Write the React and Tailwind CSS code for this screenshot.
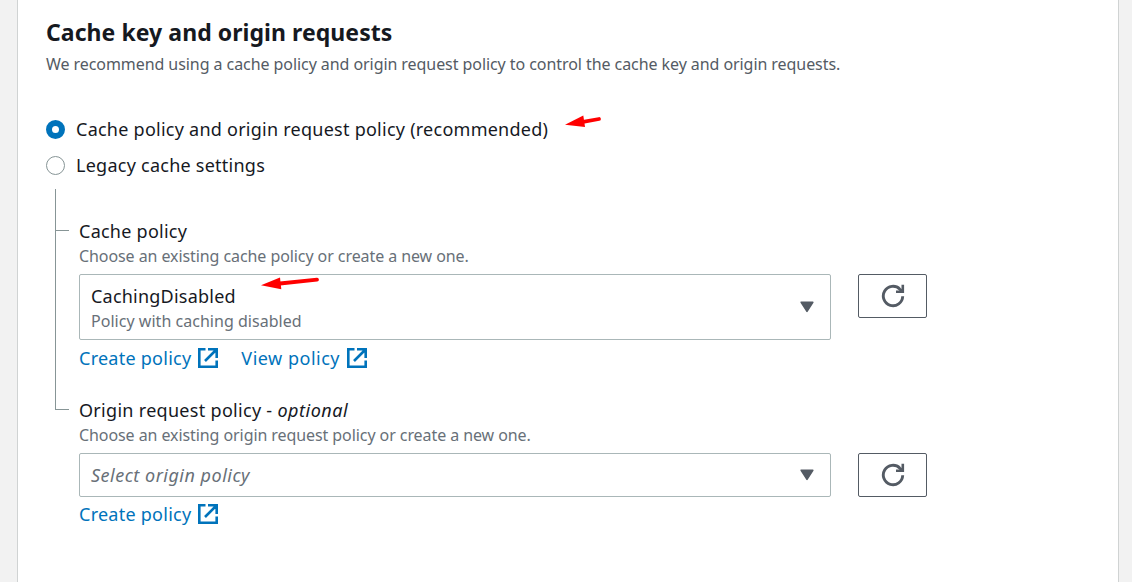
const Radio = ({ checked, children }) => (
  <label className="flex h-7 items-center">
    <span
      className={
        checked
          ? "size-[19px] rounded-full border-[6px] border-[#0073bb] bg-white"
          : "size-[19px] rounded-full border-[1.5px] border-[#879596] bg-white"
      }
    />
    <span className="ml-[11px] text-[18px] tracking-[0.25px] whitespace-nowrap">{children}</span>
  </label>
);

const External = () => (
  <svg className="ml-[7px]" width="20" height="20" viewBox="0 0 20 20" fill="none" stroke="#0073bb" strokeWidth="2.6">
    <path d="M7.5 1.3H1.3V18.7H18.7V12.5" />
    <path d="M10 1.3H18.7V10M18 2L7 13" />
  </svg>
);

const PolicyLink = ({ children }) => (
  <a className="flex items-center text-[18px] text-[#0073bb] whitespace-nowrap">
    {children}
    <External />
  </a>
);

const Caret = () => (
  <svg className="shrink-0" width="14" height="12" viewBox="0 0 14 12">
    <path d="M1.2 1.2H12.8L7 10.4Z" fill="#545b64" stroke="#545b64" strokeWidth="1.6" strokeLinejoin="round" />
  </svg>
);

const RefreshButton = () => (
  <button className="ml-[27px] flex h-11 w-[69px] items-center justify-center rounded-[2px] border border-[#545b64] bg-white">
    <svg width="24" height="24" viewBox="0 0 24 24" fill="none" stroke="#545b64" strokeWidth="2.9">
      <path d="M21.7 12.3A9.7 9.7 0 1 1 18.9 5.2L20.8 7" />
      <path d="M21.8 0.8V7.8H15" strokeWidth="2.6" />
    </svg>
  </button>
);

const Hint = ({ children }) => (
  <p className="h-[22px] text-[16px] leading-[22px] tracking-[-0.08px] text-[#687078] whitespace-nowrap">{children}</p>
);

export default function App() {
  return (
    <div className="flex h-[582px] w-[1132px] overflow-hidden bg-[#f2f2f2] pr-[13px] pl-[17px] font-['Noto_Sans',sans-serif] text-[#16191f]">
      <main className="relative flex-1 border-r border-l border-[#d0d3d3] bg-white pt-4 pl-7">
        <h2 className="h-8 text-[23px] leading-8 font-bold tracking-[0.06px] whitespace-nowrap">
          Cache key and origin requests
        </h2>
        <p className="mt-1 h-6 text-[16px] leading-6 tracking-[-0.068px] text-[#545b64] whitespace-nowrap">
          We recommend using a cache policy and origin request policy to control the cache key and origin requests.
        </p>
        <div className="mt-[39px] flex flex-col gap-2">
          <Radio checked>Cache policy and origin request policy (recommended)</Radio>
          <Radio>Legacy cache settings</Radio>
        </div>
        <div className="mt-[10px] ml-[9px] flex">
          <div className="mr-[10px] w-[14px] shrink-0">
            <div className="h-[42px] border-b border-l border-[#879596]" />
            <div className="h-[179px] border-b border-l border-[#879596]" />
          </div>
          <div className="pt-7">
            <h3 className="h-7 text-[18px] leading-7 tracking-[0.25px]">Cache policy</h3>
            <Hint>Choose an existing cache policy or create a new one.</Hint>
            <div className="mt-[7px] flex">
              <div className="flex h-[66px] w-[752px] items-center justify-between rounded-[2px] border border-[#aab7b8] pr-4 pl-[11px]">
                <div className="pt-px">
                  <p className="h-[26px] text-[18px] leading-[25px] tracking-[0.22px]">CachingDisabled</p>
                  <p className="h-[22px] text-[16px] leading-[22px] tracking-[0.03px] text-[#687078]">
                    Policy with caching disabled
                  </p>
                </div>
                <Caret />
              </div>
              <RefreshButton />
            </div>
            <div className="mt-1 flex h-7 items-center gap-[23px]">
              <PolicyLink>
                <span className="tracking-[0.25px]">Create policy</span>
              </PolicyLink>
              <PolicyLink>
                <span className="tracking-[0.5px]">View policy</span>
              </PolicyLink>
            </div>
            <h3 className="mt-6 h-7 text-[18px] leading-7 tracking-[0.3px]">
              Origin request policy - <i className="tracking-[0.5px]">optional</i>
            </h3>
            <Hint>Choose an existing origin request policy or create a new one.</Hint>
            <div className="mt-[7px] flex">
              <div className="flex h-11 w-[752px] items-center justify-between rounded-[2px] border border-[#aab7b8] pr-4 pl-[11px]">
                <p className="text-[18px] tracking-[0.5px] text-[#687078] italic">Select origin policy</p>
                <Caret />
              </div>
              <RefreshButton />
            </div>
            <div className="mt-[3px] flex h-7 items-center">
              <PolicyLink>
                <span className="tracking-[0.25px]">Create policy</span>
              </PolicyLink>
            </div>
          </div>
        </div>
        <svg className="absolute top-[112px] left-[546px]" width="40" height="20" viewBox="564 112 40 20" fill="red">
          <path d="M565 124.7L583.3 115.5L585 127Z" />
          <path d="M583 121.8L599 119" stroke="red" strokeWidth="3.8" strokeLinecap="round" />
        </svg>
        <svg className="absolute top-[274px] left-[241px]" width="60" height="20" viewBox="260 274 60 20" fill="red">
          <path d="M262 285.3L281 277.5L282.3 289.2Z" />
          <path d="M281 283.5L318 279.7" stroke="red" strokeWidth="3.8" strokeLinecap="round" />
        </svg>
      </main>
    </div>
  );
}
